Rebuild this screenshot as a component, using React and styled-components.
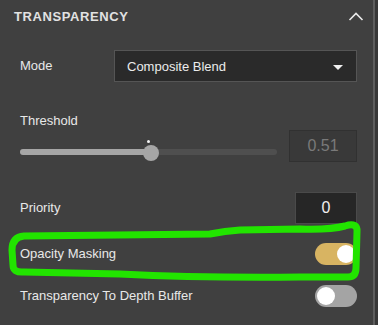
import React from 'react'
import styled, { createGlobalStyle } from 'styled-components'

const GlobalStyle = createGlobalStyle`
  html, body {
    margin: 0;
    padding: 0;
    background: #383838;
  }
  body {
    font-family: "Liberation Sans", Arial, sans-serif;
    font-size: 13px;
    color: #e6e6e6;
  }
`

const Panel = styled.div`
  position: relative;
  width: 375px;
  height: 325px;
  box-sizing: border-box;
  background: #404040;
  border-right: 2px solid #5e5e5e;
  display: flex;
  flex-direction: column;
`

const Header = styled.div`
  height: 32px;
  display: flex;
  align-items: center;
  justify-content: space-between;
  padding: 0 9px 0 14px;
`

const Title = styled.span`
  font-weight: bold;
  font-size: 13px;
  letter-spacing: 0.6px;
  color: #e2e2e2;
`

const ChevronIcon = styled.svg`
  margin-top: 2px;
`

const Body = styled.div`
  display: flex;
  flex-direction: column;
  padding: 0 16px 0 20px;
`

const Row = styled.div`
  display: flex;
  align-items: center;
  justify-content: space-between;
  height: ${p => p.h || 32}px;
  margin-top: ${p => p.mt || 0}px;
`

const Label = styled.span`
  font-size: 13px;
  line-height: 16px;
  color: #e8e8e8;
  width: ${p => (p.w ? p.w + 'px' : 'auto')};
  flex-shrink: 0;
`

const BlockLabel = styled(Label)`
  display: block;
  margin-top: ${p => p.mt || 0}px;
`

const Select = styled.div`
  flex: 1;
  height: 32px;
  box-sizing: border-box;
  background: #2a2a2a;
  border: 1px solid #555;
  display: flex;
  align-items: center;
  justify-content: space-between;
  padding: 0 13px 0 12px;
  color: #ececec;
`

const Caret = styled.span`
  width: 0;
  height: 0;
  border-left: 5px solid transparent;
  border-right: 5px solid transparent;
  border-top: 5px solid #f0f0f0;
  margin-top: 2px;
`

const SliderWrap = styled.div`
  position: relative;
  width: 257px;
  height: 32px;
`

const Track = styled.div`
  margin-top: 19px;
  height: 6px;
  border-radius: 3px;
  background: #4f4f4f;
  overflow: hidden;
`

const Fill = styled.div`
  height: 100%;
  background: #a6a6a6;
`

const Thumb = styled.div`
  position: absolute;
  top: 15px;
  width: 16px;
  height: 16px;
  margin-left: -8px;
  border-radius: 50%;
  background: #a6a6a6;
`

const Dot = styled.div`
  position: absolute;
  top: 10px;
  width: 3px;
  height: 3px;
  margin-left: -4px;
  border-radius: 50%;
  background: #f4f4f4;
`

const NumberBox = styled.div`
  width: ${p => p.w}px;
  height: 32px;
  box-sizing: border-box;
  display: flex;
  align-items: center;
  justify-content: center;
  font-size: 16px;
  background: ${p => (p.dim ? '#393939' : '#262626')};
  border: 1px solid ${p => (p.dim ? '#313131' : '#4a4a4a')};
  color: ${p => (p.dim ? '#7a7a7a' : '#f0f0f0')};
`

const Toggle = styled.div`
  width: 42px;
  height: 22px;
  border-radius: 11px;
  background: ${p => (p.on ? '#d8b462' : '#a4a4a4')};
  display: flex;
  align-items: center;
  justify-content: ${p => (p.on ? 'flex-end' : 'flex-start')};
  padding: 0 2px;
  box-sizing: border-box;
`

const Knob = styled.div`
  width: 18px;
  height: 18px;
  border-radius: 50%;
  background: #fff;
`

const Annotation = styled.svg`
  position: absolute;
  left: 0;
  top: 0;
  pointer-events: none;
`

const Chevron = () => (
  <ChevronIcon width="16" height="10" viewBox="0 0 16 10">
    <path d="M1.5 8 L8 1.5 L14.5 8" fill="none" stroke="#eaeaea" strokeWidth="1.6" />
  </ChevronIcon>
)

export default function App() {
  const value = 0.51
  return (
    <>
      <GlobalStyle />
      <Panel>
        <Header>
          <Title>TRANSPARENCY</Title>
          <Chevron />
        </Header>
        <Body>
          <Row mt={18}>
            <Label w={94}>Mode</Label>
            <Select>
              <span>Composite Blend</span>
              <Caret />
            </Select>
          </Row>
          <BlockLabel mt={31}>Threshold</BlockLabel>
          <Row mt={1}>
            <SliderWrap>
              <Track>
                <Fill style={{ width: `${value * 100}%` }} />
              </Track>
              <Dot style={{ left: `${value * 100}%` }} />
              <Thumb style={{ left: `${value * 100}%` }} />
            </SliderWrap>
            <NumberBox w={68} dim>0.51</NumberBox>
          </Row>
          <Row mt={30}>
            <Label>Priority</Label>
            <NumberBox w={62}>0</NumberBox>
          </Row>
          <Row h={42} mt={9}>
            <Label>Opacity Masking</Label>
            <Toggle on>
              <Knob />
            </Toggle>
          </Row>
          <Row h={42}>
            <Label>Transparency To Depth Buffer</Label>
            <Toggle>
              <Knob />
            </Toggle>
          </Row>
        </Body>
        <Annotation width="378" height="325" viewBox="0 0 378 325">
          <path
            d="M24 236 Q12 237 12 250 L13 265 Q13 273 24 272 L120 274 Q200 278 300 277 L348 277 Q356 277 356 268 L357 232 Q358 222 345 226 Q330 230 300 229 L240 230 Q225 231 210 234 Z"
            fill="none"
            stroke="#22e400"
            strokeWidth="7"
            strokeLinejoin="round"
          />
        </Annotation>
      </Panel>
    </>
  )
}
